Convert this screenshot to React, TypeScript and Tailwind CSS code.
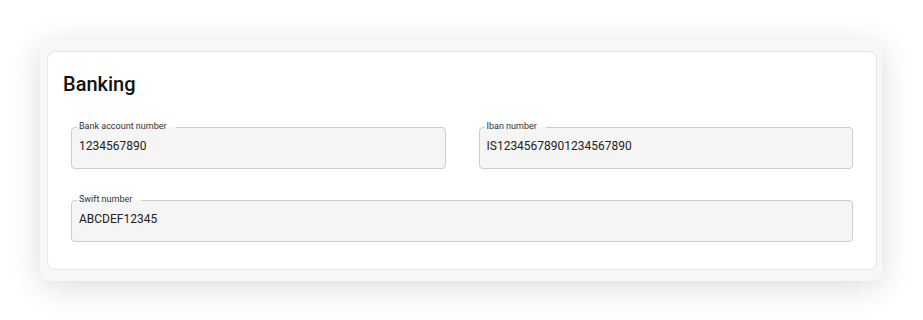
import React from 'react';

type FieldProps = { label: string; value: string; className?: string };

function OutlinedField({ label, value, className = '' }: FieldProps) {
  return (
    <fieldset
      className={`m-0 h-[48px] min-w-0 rounded-[4px] border border-[#cdcdcd] bg-[#f5f5f5] px-[7px] pb-0 pt-0 ${className}`}
    >
      <legend className="relative top-[-1px] ml-[-2px] pl-[2px] pr-[9px] text-[9px] leading-[12px] text-[#333]">{label}</legend>
      <div className="pt-[5px] text-[12px] leading-[16px] text-[#222]">{value}</div>
    </fieldset>
  );
}

export default function App() {
  return (
    <div className="min-h-[320px] bg-white pt-10 pl-10 pr-[41px] font-['Roboto',sans-serif]">
      <div className="rounded-[10px] bg-[#f7f7f7] pt-[11px] pb-[11px] pl-[7px] pr-[5px] shadow-[0_6px_32px_rgba(0,0,0,0.14)]">
        <div className="rounded-[8px] border border-[#e6e6e6] bg-white pb-[27px]">
          <h2 className="pl-[15px] pt-[20px] text-[20px] font-medium leading-[24px] text-[#111]">Banking</h2>
          <div className="mt-[25px] grid grid-cols-2 gap-x-[33px] gap-y-[25px] pl-[23px] pr-[23px]">
            <OutlinedField label="Bank account number" value="1234567890" />
            <OutlinedField label="Iban number" value="IS12345678901234567890" />
            <OutlinedField label="Swift number" value="ABCDEF12345" className="col-span-2" />
          </div>
        </div>
      </div>
    </div>
  );
}
